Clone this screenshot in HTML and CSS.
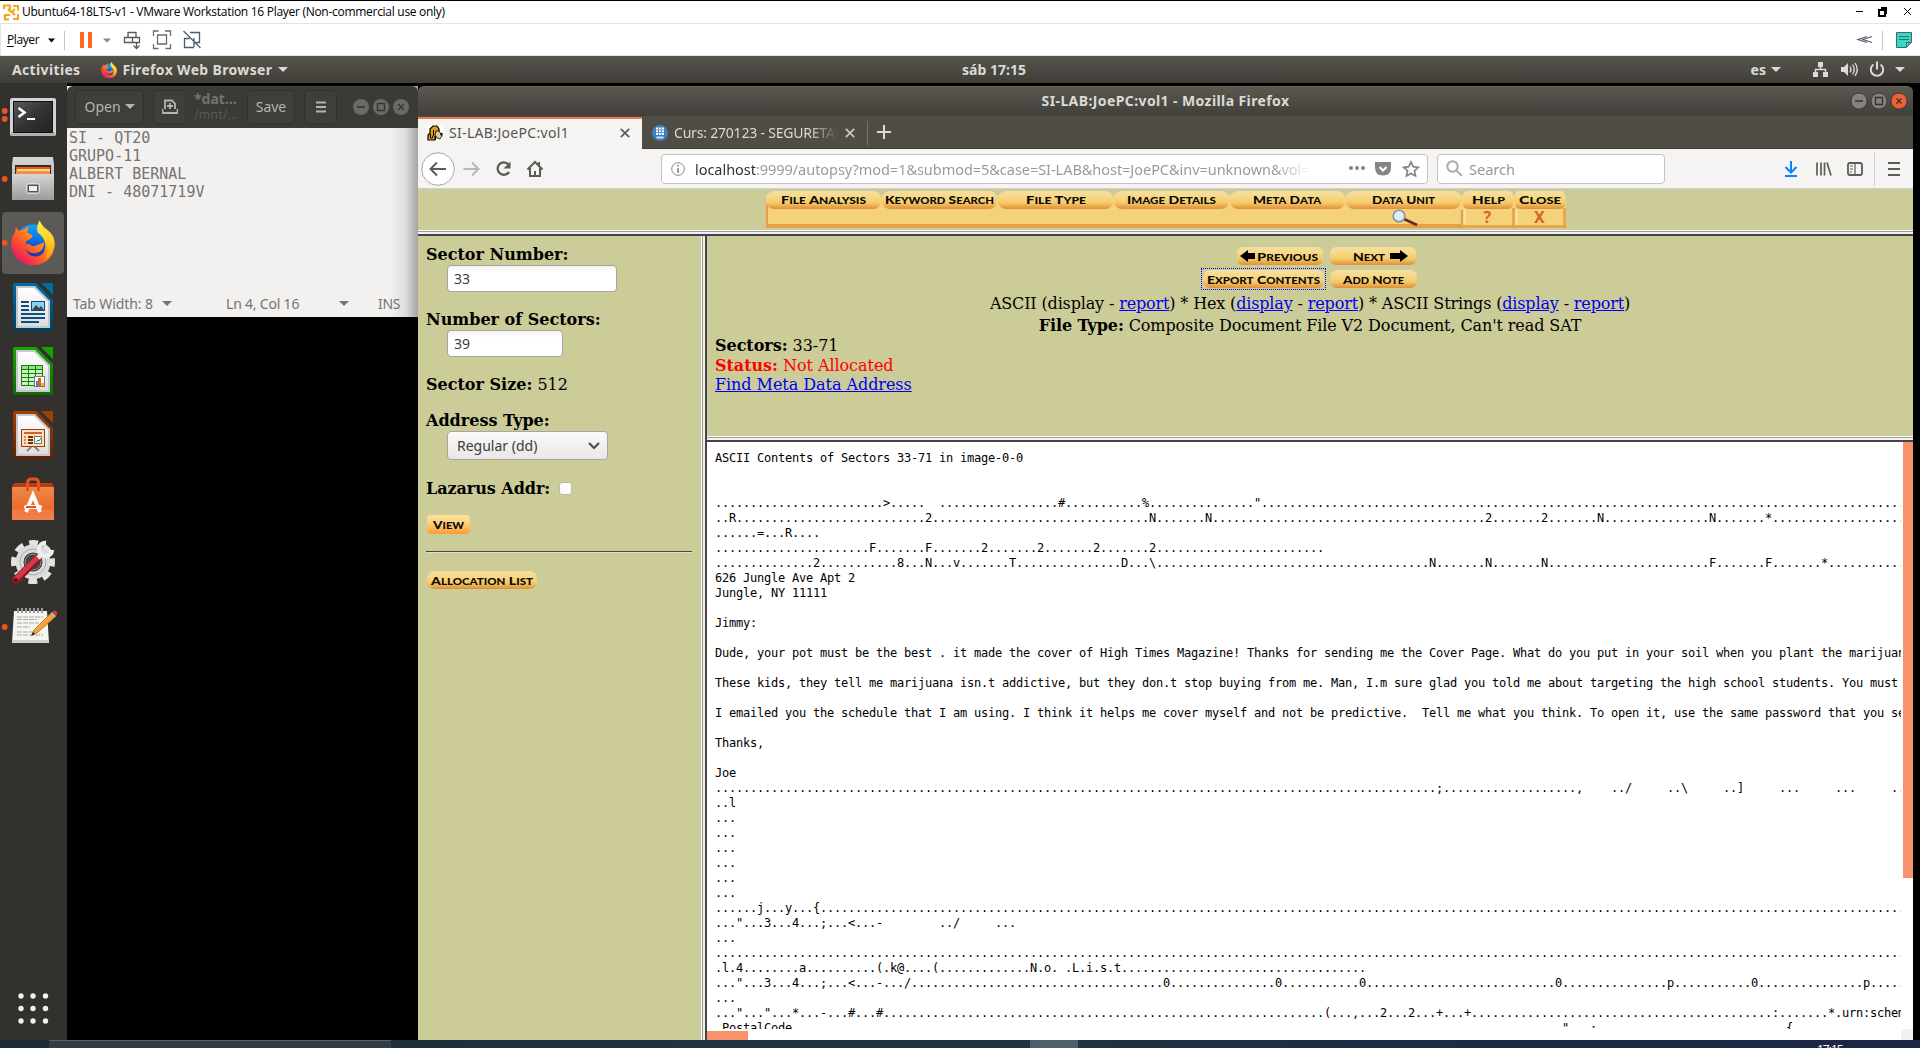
FILE: index.html
```html
<!DOCTYPE html>
<html lang="en">
<head>
<meta charset="utf-8">
<title>Ubuntu64-18LTS-v1 - VMware Workstation 16 Player</title>
<link rel="stylesheet" href="styles.css">
</head>
<body>
<svg width="0" height="0" class="defs">
  <defs>
    <linearGradient id="gold" x1="0" y1="0" x2="0" y2="1"><stop offset="0" stop-color="#f3dfa6"/><stop offset=".3" stop-color="#f8d988"/><stop offset=".65" stop-color="#f4cb6c"/><stop offset="1" stop-color="#e08f35"/></linearGradient>
    <linearGradient id="goldv" x1="0" y1="0" x2="0" y2="1"><stop offset="0" stop-color="#fbe2a0"/><stop offset=".45" stop-color="#ffd076"/><stop offset="1" stop-color="#fa9a38"/></linearGradient>
    <linearGradient id="silver" x1="0" y1="0" x2="0" y2="1"><stop offset="0" stop-color="#d6d6d6"/><stop offset="1" stop-color="#9c9c9c"/></linearGradient>
    <linearGradient id="paper" x1="0" y1="0" x2="0" y2="1"><stop offset="0" stop-color="#fff"/><stop offset="1" stop-color="#dedede"/></linearGradient>
    <linearGradient id="screen" x1="0" y1="0" x2="1" y2="1"><stop offset="0" stop-color="#5a5a5a"/><stop offset=".5" stop-color="#333"/><stop offset="1" stop-color="#222"/></linearGradient>
    <linearGradient id="fox" x1=".9" y1="0" x2=".1" y2=".9"><stop offset="0" stop-color="#ffe63c"/><stop offset=".35" stop-color="#ffa31a"/><stop offset=".65" stop-color="#ff5a28"/><stop offset="1" stop-color="#e3106c"/></linearGradient>
    <linearGradient id="globe" x1=".6" y1="0" x2=".4" y2="1"><stop offset="0" stop-color="#0fa8ff"/><stop offset=".5" stop-color="#0a5fe0"/><stop offset="1" stop-color="#33187d"/></linearGradient>
    <linearGradient id="flame" x1="0" y1="0" x2="0" y2="1"><stop offset="0" stop-color="#fff04a"/><stop offset=".5" stop-color="#ffcf26"/><stop offset="1" stop-color="#ff9012"/></linearGradient>
    <linearGradient id="bag" x1="0" y1="0" x2="0" y2="1"><stop offset="0" stop-color="#ea8a4c"/><stop offset=".65" stop-color="#ee6a2c"/><stop offset=".7" stop-color="#ef7a42"/><stop offset="1" stop-color="#f08050"/></linearGradient>
    <linearGradient id="wr" x1="0" y1="0" x2="0" y2="1"><stop offset="0" stop-color="#0369a3"/><stop offset="1" stop-color="#024064"/></linearGradient>
    <linearGradient id="ca" x1="0" y1="0" x2="0" y2="1"><stop offset="0" stop-color="#18a303"/><stop offset="1" stop-color="#106802"/></linearGradient>
    <linearGradient id="im" x1="0" y1="0" x2="0" y2="1"><stop offset="0" stop-color="#a33e03"/><stop offset="1" stop-color="#5e2302"/></linearGradient>
    <symbol id="firefox" viewBox="0 0 44 44">
      <circle cx="22" cy="23" r="19" fill="url(#globe)"/>
      <path d="M5 6 Q6 10 8.500 10.500 Q11 9 13.500 8.500 Q15 7 18 6 Q16.500 9 16.500 12 L21.500 15 Q21 18 17 19.500 Q14 21 14.500 24 Q16 22.500 19 24 Q22 27 25 25 L33 22 Q33 31 25 32.500 Q17 33.500 14 27 Q17 37 26 36 Q35 34 34 24 Q34 17 27 12 Q25 7 28.500 0 Q31 7 37 10 Q44 15 43.500 26 Q41 43 23 45 Q4 44 .5 27 Q-.5 17 4 12 Z" fill="url(#fox)"/>
      <path d="M28.500 0 Q31 6 37 10 Q44 16 43.500 24 Q42 35 34 39 Q38 30 35 23 Q33 17 27 12 Q25 7 28.500 0Z" fill="url(#flame)"/>
    </symbol>
  </defs>
</svg>

<header class="host-title">
  <svg class="vm-logo" width="17" height="17" viewBox="0 0 17 17" fill="none" stroke="#efa91b" stroke-width="2.200"><path d="M1 5V1.500h6V6M10 2h5v4.500M15 10v5h-5M6 15.500H2V11h5M5 5l3 3M12 5l-3 3 3 3" /></svg>
  <span class="host-caption">Ubuntu64-18LTS-v1 - VMware Workstation 16 Player (Non-commercial use only)</span>
  <svg class="host-controls" width="60" height="12" fill="none" stroke="#000" shape-rendering="crispEdges"><path d="M2 5.500h7"/><path d="M25 4h6v6h-6zM27 2h5v6" stroke-width="1.500"/><path d="M50 2l7 7M57 2l-7 7" shape-rendering="auto"/></svg>
</header>
<div class="host-tools">
  <span class="player"><u>P</u>layer</span>
  <svg width="200" height="30" viewBox="40 0 200 30" fill="none" stroke="#6a7076" stroke-width="1.300">
    <path d="M48 13.500h7l-3.500 4z" fill="#000" stroke="none"/><path d="M64.500 6v19" stroke="#c8c8c8" stroke-width="1"/>
    <path d="M80 7h4v16h-4zM88 7h4v16h-4z" fill="#ff6a1f" stroke="none"/><path d="M103 13.500h8l-4 4z" fill="#888" stroke="none"/>
    <path d="M128 7.500h8v5h-8zM124.500 12.500h8v5h-8zM132.500 12.500h7v5h-7zM136.500 17v6M133.500 20.500l3 3 3-3" stroke="#55595d"/>
    <path d="M153.500 11v-5h5M165 6h5.500v5M170.500 19v4.500h-5M158.500 23.500h-5V19M157.500 10h9v9h-9z" stroke="#6b6b6b"/>
    <path d="M190 7.500h9.500v10h-4M194 22.500h-9.500v-9h5M183.500 6l17 17M194 13v9" stroke="#4d5d69"/>
  </svg>
  <svg class="host-right" width="70" height="30" fill="none" stroke="#54606b"><path d="M18 11.500l-9 3 9 3M23 11.500l-9 3 9 3" stroke-width="1.200"/><path d="M33.500 6v19" stroke="#c8c8c8"/><path d="M47.500 7.500h15v10l-5 5h-10z" fill="#2fdcc3"/><path d="M62 17.500h-4.500V22M50 11.500h10M50 14.500h10"/></svg>
</div>

<div class="guest-bar">
  <div class="bar-left"><span class="act">Activities</span><svg width="16" height="16"><use href="#firefox"/></svg><span class="app-name">Firefox Web Browser</span><i class="tri"></i></div>
  <span class="clock">sáb 17:15</span>
  <div class="bar-right"><span>es</span><i class="tri"></i>
    <svg width="77" height="18" fill="none" stroke="#dcdad5" stroke-width="1.500"><path d="M5 1h5v5H5zM0 11h5v5H0zM10 11h5v5h-5z" fill="#dcdad5" stroke="none"/><path d="M7.500 6v3M2.500 11V8.500h10V11"/><path d="M28 6h3l4-4v13l-4-4h-3z" fill="#dcdad5" stroke="none"/><path d="M37 5.500q2 3 0 6M39.500 3.500q3.500 5 0 10M42 2q4.500 6.500 0 13" stroke-width="1.300"/><path d="M60.500 3.500a6.200 6.200 0 1 0 7 0M64 .500v8" stroke-width="2"/></svg>
    <i class="tri"></i></div>
</div>

<main class="desktop">
  <nav class="dock">
    <svg viewBox="0 0 67 64"><circle cx="4.700" cy="28" r="2.900" class="run"/><circle cx="4.700" cy="36" r="2.900" class="run"/><rect x="10" y="15" width="46" height="38" rx="2" fill="#d3d3d3"/><path d="M11 49h44v4H11z" fill="#b0b0b0"/><rect x="13.500" y="18.500" width="39" height="31" fill="url(#screen)" stroke="#111"/><path d="M18.500 25l6 4.500-6 4.500" fill="none" stroke="#fff" stroke-width="2.600"/><path d="M27 36h8" stroke="#fff" stroke-width="2"/></svg>
    <svg viewBox="0 0 67 64"><circle cx="4.700" cy="32" r="2.900" class="run"/><path d="M13 10h40l1 8v35H12V18z" fill="url(#silver)"/><path d="M15 18h36v10H15z" fill="#3b2a1c"/><path d="M16 20h34v8H16z" fill="#d8641c"/><path d="M17 22h33v2H17z" fill="#ffd39b"/><path d="M16 24h34v4H16z" fill="#f2923e"/><path d="M12 27h42v26H12z" fill="url(#silver)"/><rect x="26.500" y="36.500" width="13" height="10" rx="2" fill="#999" stroke="#ddd"/><rect x="28.500" y="38.500" width="9" height="6" fill="#eee" stroke="#555"/></svg>
    <svg viewBox="0 0 67 64"><rect x="2" y="1" width="62" height="62" rx="4" fill="#5b5a56"/><circle cx="4.700" cy="32" r="2.900" class="run"/><use href="#firefox" x="11" y="9" width="44" height="45"/></svg>
    <svg viewBox="0 0 67 64"><path d="M15 8h21l17 17v29q0 2-2 2H15q-2 0-2-2V10q0-2 2-2z" fill="url(#wr)"/><path d="M41 8h12v12z" fill="#0369a3"/><path d="M16 11h19l15 15v27H16z" fill="#c5c9cc"/><path d="M18 13h16l14 14v24H18z" fill="url(#paper)"/><path d="M21 27h8M21 31h8M21 35h8M21 39h24M21 43h24M21 47h18" stroke="#0b4f7a" stroke-width="1.800"/><rect x="31.500" y="26.500" width="13" height="9" fill="#8fd0f5" stroke="#0b4f7a"/><path d="M32 35l4-5 3 3 2-2 3 4z" fill="#444"/></svg>
    <svg viewBox="0 0 67 64"><path d="M15 8h21l17 17v29q0 2-2 2H15q-2 0-2-2V10q0-2 2-2z" fill="url(#ca)"/><path d="M41 8h12v12z" fill="#18a303"/><path d="M16 11h19l15 15v27H16z" fill="#c5c9cc"/><path d="M18 13h16l14 14v24H18z" fill="url(#paper)"/><path d="M21.500 26.500h21v20h-21z" fill="#ccf4c6"/><path d="M22 27h20v3H22z" fill="#92e285"/><path d="M21.500 26.500h21v20h-21zM21 30.500h21M21 34.500h21M21 38.500h21M21 42.500h21M28.500 26v20M35.500 26v20" fill="none" stroke="#148003"/><rect x="34.500" y="37.500" width="10" height="10" fill="#fff" stroke="#777"/><path d="M36 42h2v5h-2z" fill="#1c99e0"/><path d="M38 39h3v8h-3z" fill="#e0601c"/><path d="M41 44h3v3h-3z" fill="#e8b920"/></svg>
    <svg viewBox="0 0 67 64"><path d="M15 8h21l17 17v29q0 2-2 2H15q-2 0-2-2V10q0-2 2-2z" fill="url(#im)"/><path d="M41 8h12v12z" fill="#a33e03"/><path d="M16 11h19l15 15v27H16z" fill="#c5c9cc"/><path d="M18 13h16l14 14v24H18z" fill="url(#paper)"/><path d="M32 43l-5 5M34 43l5 5" stroke="#888" stroke-width="2"/><rect x="21.500" y="26.500" width="23" height="17" fill="#fbe0cb" stroke="#a33e03"/><path d="M24 30h18" stroke="#d8641c" stroke-width="2"/><path d="M24 34h2M24 37h2M24 40h2" stroke="#e08a50" stroke-width="2"/><path d="M28 34h5M28 37h5M28 40h5" stroke="#7a2d02" stroke-width="2"/><rect x="34.500" y="33.500" width="7" height="7" fill="#fff" stroke="#777"/><path d="M36 39l2-2 1 1 2-3" stroke="#249a24" fill="none"/></svg>
    <svg viewBox="0 0 67 64"><path d="M14 16h38l2 4H12z" fill="#b83c10"/><path d="M12 20h42v33H12z" fill="url(#bag)"/><path d="M27.500 24v-8q0-4 4-4h3q4 0 4 4v8" fill="none" stroke="#e5521c" stroke-width="3"/><path d="M26 45l7-17 7 17" fill="none" stroke="#fff" stroke-width="3.800"/><rect x="24" y="38" width="18" height="4" rx="2" fill="#fff"/><path d="M26 39h10v2H26z" fill="#e5521c"/></svg>
    <svg viewBox="0 0 67 64"><circle cx="33" cy="31" r="13.500" fill="none" stroke="#dcdcdc" stroke-width="8"/><circle cx="33" cy="31" r="19.500" fill="none" stroke="#e3e3e3" stroke-width="5" stroke-dasharray="9 6.315" stroke-dashoffset="4.500"/><circle cx="33" cy="31" r="13" fill="none" stroke="#aaa"/><circle cx="33" cy="31" r="8" fill="#444" stroke="#999"/><path d="M16 49L38 27" stroke="#8e1623" stroke-width="8" stroke-linecap="round"/><path d="M16 48L37 27" stroke="#d03a42" stroke-width="5" stroke-linecap="round"/><circle cx="16" cy="49" r="2" fill="#5a0c14"/><path d="M38 27l5-5" stroke="#e8e8e8" stroke-width="5"/><path d="M46 12a6.500 6.500 0 1 0 6 7" fill="none" stroke="#eee" stroke-width="4.500"/></svg>
    <svg viewBox="0 0 67 64"><circle cx="4.700" cy="32" r="2.900" class="run"/><path d="M14 16h33l2 32H12z" fill="#f4f4f0"/><path d="M12.500 45h36v3h-36z" fill="#cfcfc8"/><path d="M18 13v5M22 13v5M26 13v5M30 13v5M34 13v5M38 13v5M42 13v5" stroke="#999" stroke-width="2"/><path d="M17 22h26M17 24.500h20M17 28h22M17 32h13M17 37h16M17 40h26" stroke="#aaa" stroke-dasharray="5 1"/><path d="M32 40l2-5 16-16 4 4-17 15z" fill="#f3a33a" stroke="#b56a18" stroke-width=".8"/><path d="M50 19l2-2 4 4-2 2z" fill="#bbb"/><path d="M52 17q3-3 5 0 1 2-1 4z" fill="#e23a3a"/><path d="M31 41l2-4 2 2z" fill="#222"/></svg>
    <svg class="apps-grid" viewBox="0 0 67 64" fill="#f2f1f0"><circle cx="21" cy="20" r="2.700"/><circle cx="33" cy="20" r="2.700"/><circle cx="45.500" cy="20" r="2.700"/><circle cx="21" cy="32.500" r="2.700"/><circle cx="33" cy="32.500" r="2.700"/><circle cx="45.500" cy="32.500" r="2.700"/><circle cx="21" cy="45" r="2.700"/><circle cx="33" cy="45" r="2.700"/><circle cx="45.500" cy="45" r="2.700"/></svg>
  </nav>

  <section class="gedit">
    <div class="gedit-head">
      <span class="gbtn open">Open<i class="tri"></i></span>
      <span class="gbtn newdoc"><svg width="16" height="16" fill="none" stroke="#b5b4af" stroke-width="1.800"><path d="M3 10V1.500h7l3 3V10M8 4v6M5 7h6M.500 10v4h15v-4"/></svg></span>
      <div class="gtitle"><b>*dat…</b><span>/mnt/…</span></div>
      <span class="gbtn save">Save</span>
      <span class="gbtn burger"><svg width="10" height="12" stroke="#b5b4af" stroke-width="2"><path d="M0 1.500h10M0 6h10M0 10.500h10"/></svg></span>
      <svg class="gctl" width="60" height="20" fill="none" stroke="#363531" stroke-width="1.300"><g fill="#6b6a65" stroke="none"><circle cx="9" cy="10" r="8"/><circle cx="29" cy="10" r="8"/><circle cx="49" cy="10" r="8"/></g><path d="M5 10h8M25.500 6.500h7v7h-7zM46 7l6 6M52 7l-6 6"/></svg>
    </div>
    <pre class="gedit-text">SI - QT20
GRUPO-11
ALBERT BERNAL
DNI - 48071719V</pre>
    <div class="gedit-status"><span class="tabw">Tab Width: 8</span><i class="tri"></i><span class="pos">Ln 4, Col 16</span><i class="tri"></i><span class="ins">INS</span></div>
  </section>

  <section class="firefox">
    <div class="ff-title"><span>SI-LAB:JoePC:vol1 - Mozilla Firefox</span>
      <svg class="ffctl" width="60" height="18" fill="none" stroke="#33322e" stroke-width="1.300"><g stroke="#33322e" stroke-width=".8"><circle cx="9" cy="9" r="8" fill="#85837c"/><circle cx="29" cy="9" r="8" fill="#85837c"/><circle cx="49" cy="9" r="8" fill="#ee6035"/></g><path d="M5 9h8M25.500 5.500h7v7h-7zM46.500 6.500l5 5M51.500 6.500l-5 5"/></svg>
    </div>
    <div class="ff-tabs">
      <div class="tab active">
        <svg width="16" height="16"><path fill="#fff" d="M0 0h16v16H0z"/><path d="M1 10l2-2V4l3-3h4l2 3v4l-3 3-1 4H1z" fill="#d9a115" stroke="#000" stroke-width="1.200"/><path d="M9 6h3l2 3 1 2-2 3-3-1-2-3z" fill="#e5cda0" stroke="#000" stroke-width=".8"/><path d="M6.500 5v5l-2 4M3.500 9v4M8 11v4" fill="none" stroke="#000"/><path d="M13.500 8h2v2.500h-2z"/></svg>
        <span>SI-LAB:JoePC:vol1</span><svg class="x" width="10" height="10" stroke="#5a5955" stroke-width="1.700"><path d="M.800.800l8.400 8.400M9.200.800L.800 9.200"/></svg>
      </div>
      <div class="tab idle">
        <svg width="16" height="16"><circle cx="8" cy="8" r="8" fill="#3c7fc0"/><path d="M4 2.500h8v7.500H4z" fill="#fff"/><path d="M6.500 2v8M9.300 2v8M4 5h8M4 7.500h8" stroke="#3c7fc0" stroke-width=".8"/><path d="M4.500 12.500h7" stroke="#cfe0f0" stroke-width="2"/></svg>
        <span>Curs: 270123 - SEGURETAT</span><svg class="x" width="10" height="10" stroke="#c9c7c1" stroke-width="1.700"><path d="M.800.800l8.400 8.400M9.200.800L.800 9.200"/></svg>
      </div>
      <svg class="plus" width="14" height="14" stroke="#dddbd5" stroke-width="2"><path d="M0 7h14M7 0v14"/></svg>
    </div>
    <div class="ff-nav">
      <svg width="135" height="40" fill="none" stroke="#5c5b58" stroke-width="2"><circle cx="20" cy="20" r="16.300" fill="#fff" stroke="#a9a7a4" stroke-width="1"/><path d="M28 20H13M19 13.500L12.500 20l6.500 6.500"/><path d="M45.500 20H60M54 13.500l6.500 6.500-6.500 6.500" stroke="#b9b8b6"/><path d="M90.500 15.500a6.200 6.200 0 1 0 .5 7.500" stroke-width="2.300"/><path d="M92.500 12.500v7h-7z" fill="#5c5b58" stroke="none"/><path d="M109.500 20.500L117 13l7.500 7.500M112 19v8h10v-8M117 22v5M121 13v4" /></svg>
      <div class="url">
        <svg width="14" height="14" fill="none" stroke="#888"><circle cx="7" cy="7" r="6.300"/><path d="M7 6v5M7 3v1.700" stroke-width="1.600"/></svg>
        <span class="addr"><b>localhost</b>:9999/autopsy?mod=1&amp;submod=5&amp;case=SI-LAB&amp;host=JoePC&amp;inv=unknown&amp;vol=vol1</span>
        <svg width="76" height="18" fill="#868584"><circle cx="4" cy="8" r="2"/><circle cx="10" cy="8" r="2"/><circle cx="16" cy="8" r="2"/><path d="M28 2h16v5.500q0 8-8 8t-8-8z"/><path d="M32.500 7l3.500 3.500L39.500 7" fill="none" stroke="#fff" stroke-width="2"/><path d="M64 2l2.200 4.700 5.100.6-3.800 3.500 1 5.100-4.500-2.500-4.500 2.500 1-5.100-3.800-3.500 5.100-.6z" fill="none" stroke="#868584" stroke-width="1.700"/></svg>
      </div>
      <div class="search"><svg width="17" height="17" fill="none" stroke="#aaa" stroke-width="2"><circle cx="6.500" cy="6.500" r="5.200"/><path d="M10.500 10.500l5.500 5.500"/></svg><span>Search</span></div>
      <svg class="nav-right" width="135" height="40" fill="none" stroke="#5c5b58" stroke-width="2"><path d="M13 12v11M7.500 18l5.500 5.500 5.500-5.500M7 27h12" stroke="#0a84ff"/><path d="M39 13.500v13M43 13.500v13M46.500 13.500v13M49 13.500l4 13" stroke-width="1.700"/><rect x="70" y="14" width="14" height="12" rx="2" stroke-width="1.800"/><path d="M77 14v12M72 17h3M72 20h3M72 23h2" stroke-width="1.200"/><path d="M96.500 3v34" stroke="#d4d2d0" stroke-width="1"/><path d="M110 14h12M110 20h12M110 26h12"/></svg>
    </div>

    <div class="frames">
      <div class="frame-menu">
        <svg width="800" height="38" class="cop">
          <rect width="800" height="38" fill="#f4d27c"/><path d="M0 34h696v4H0zM0 10h2v28H0z" fill="#e6a148"/>
          <path d="M0 0h800v5H0z" fill="#c9cb9c"/>
          <g fill="url(#gold)"><rect x="0" y="1" width="115" height="18" rx="8"/><rect x="116" y="1" width="115" height="18" rx="8"/><rect x="232" y="1" width="115" height="18" rx="8"/><rect x="348" y="1" width="115" height="18" rx="8"/><rect x="464" y="1" width="115" height="18" rx="8"/><rect x="580" y="1" width="115" height="18" rx="8"/><rect x="697" y="1" width="50" height="18" rx="5"/><rect x="749" y="1" width="50" height="18" rx="5"/></g>
          <path d="M696 20v18M747.500 18v20M798.500 18v20M696 36.500h104" stroke="#e6a148" stroke-width="2.500"/>
          <path d="M698.500 20v15M750.500 20v15" stroke="#fae3a5" stroke-width="2"/>
          <text x="15" y="14" textLength="85" lengthAdjust="spacingAndGlyphs">F<tspan>ILE</tspan> A<tspan>NALYSIS</tspan></text>
          <text x="119" y="14" textLength="109" lengthAdjust="spacingAndGlyphs">K<tspan>EYWORD</tspan> S<tspan>EARCH</tspan></text>
          <text x="260" y="14" textLength="60" lengthAdjust="spacingAndGlyphs">F<tspan>ILE</tspan> T<tspan>YPE</tspan></text>
          <text x="361" y="14" textLength="89" lengthAdjust="spacingAndGlyphs">I<tspan>MAGE</tspan> D<tspan>ETAILS</tspan></text>
          <text x="487" y="14" textLength="68" lengthAdjust="spacingAndGlyphs">M<tspan>ETA</tspan> D<tspan>ATA</tspan></text>
          <text x="606" y="14" textLength="63" lengthAdjust="spacingAndGlyphs">D<tspan>ATA</tspan> U<tspan>NIT</tspan></text>
          <text x="706" y="14" textLength="33" lengthAdjust="spacingAndGlyphs">H<tspan>ELP</tspan></text>
          <text x="753" y="14" textLength="42" lengthAdjust="spacingAndGlyphs">C<tspan>LOSE</tspan></text>
          <text x="717.500" y="33" class="red">?</text><text x="768" y="33" class="red">X</text>
          <path d="M638 29l13 6" stroke="#6b2d2a" stroke-width="3"/><circle cx="633" cy="26" r="5.800" fill="#d8f0f6" stroke="#8a8f96" stroke-width="1.500"/>
        </svg>
      </div>
      <div class="split-h"></div>
      <div class="frame-row">
        <div class="frame-form">
          <b class="lbl">Sector Number:</b>
          <div class="field wide">33</div>
          <b class="lbl">Number of Sectors:</b>
          <div class="field narrow">39</div>
          <div class="lbl"><b>Sector Size:</b> 512</div>
          <b class="lbl at">Address Type:</b>
          <div class="select">Regular (dd)<svg width="12" height="8" fill="none" stroke="#4a4a48" stroke-width="2"><path d="M1 1l5 5 5-5"/></svg></div>
          <div class="lbl laz"><b>Lazarus Addr:</b><i class="check"></i></div>
          <svg class="view cop" width="43" height="19"><rect width="43" height="19" rx="4" fill="url(#goldv)"/><text x="6" y="14" textLength="31" lengthAdjust="spacingAndGlyphs">V<tspan>IEW</tspan></text></svg>
          <div class="rule"></div>
          <svg class="cop" width="110" height="18"><rect width="110" height="18" rx="8" fill="url(#gold)"/><text x="4" y="13.500" textLength="102" lengthAdjust="spacingAndGlyphs">A<tspan>LLOCATION</tspan> L<tspan>IST</tspan></text></svg>
        </div>
        <div class="split-v"></div>
        <div class="frame-main">
          <div class="frame-info">
            <div class="btns b1">
              <svg class="cop" width="86" height="18"><rect width="86" height="18" rx="6" fill="url(#gold)"/><path d="M3 9l8-6v3h7v6H11v3z"/><text x="20" y="14" textLength="61" lengthAdjust="spacingAndGlyphs">P<tspan>REVIOUS</tspan></text></svg>
              <svg class="cop" width="86" height="18"><rect width="86" height="18" rx="6" fill="url(#gold)"/><path d="M78 9l-8-6v3H60v6h10v3z"/><text x="23" y="14" textLength="32" lengthAdjust="spacingAndGlyphs">N<tspan>EXT</tspan></text></svg>
            </div>
            <div class="btns b2">
              <span class="focus"><svg class="cop" width="121" height="18"><rect width="121" height="18" rx="7" fill="url(#gold)"/><text x="4" y="13.500" textLength="113" lengthAdjust="spacingAndGlyphs">E<tspan>XPORT</tspan> C<tspan>ONTENTS</tspan></text></svg></span>
              <svg class="cop" width="87" height="18"><rect width="87" height="18" rx="7" fill="url(#gold)"/><text x="13" y="13.500" textLength="61" lengthAdjust="spacingAndGlyphs">A<tspan>DD</tspan> N<tspan>OTE</tspan></text></svg>
            </div>
            <p class="modes">ASCII (display - <a href="#">report</a>) * Hex (<a href="#">display</a> - <a href="#">report</a>) * ASCII Strings (<a href="#">display</a> - <a href="#">report</a>)</p>
            <p class="ftype"><b>File Type:</b> Composite Document File V2 Document, Can't read SAT</p>
            <p class="l"><b>Sectors:</b> 33-71</p>
            <p class="l status"><b>Status:</b> Not Allocated</p>
            <p class="l find"><a href="#">Find Meta Data Address</a></p>
          </div>
          <div class="split-h"></div>
          <div class="frame-dump">
            <pre id="dump"></pre>
            <div class="vtrack"><i></i></div>
            <div class="htrack"><i></i></div>
            <div class="corner"></div>
          </div>
        </div>
      </div>
    </div>
  </section>
</main>
<footer class="taskbar"><i class="t1"></i><i class="t2"></i><span>17:15</span></footer>
<script src="dump.js"></script>
</body>
</html>
```

FILE: dump.js
```js
// Each dump row lists [column, text] pairs; unprintable bytes between them show as dots.
// A row may end with a number: the column at which the dots stop.
const END = 174;
function row(...parts) {
  let out = "";
  for (const p of parts) {
    if (typeof p === "number") { out = out.padEnd(p, "."); return out; }
    out = out.padEnd(p[0], ".") + p[1];
  }
  return out.padEnd(END, ".");
}
const gap = (n) => " ".repeat(n);
const dots = "...";
const lines = [
  "ASCII Contents of Sectors 33-71 in image-0-0",
  "", "",
  row([24, ">....." + gap(2)], [49, "#"], [61, "%"], [77, '"']),
  row([2, "R"], [30, "2"], [62, "N"], [70, "N"], [110, "2"], [118, "2"], [126, "N"], [142, "N"], [150, "*"]),
  "......=...R....",
  row([22, "F"], [30, "F"], [38, "2"], [46, "2"], [54, "2"], [62, "2"], 87),
  row([14, "2"], [26, "8"], [30, "N"], [34, "v"], [42, "T"], [58, "D"], [62, "\\"], [102, "N"], [110, "N"], [118, "N"], [142, "F"], [150, "F"], [158, "*"]),
  "626 Jungle Ave Apt 2",
  "Jungle, NY 11111",
  "",
  "Jimmy:",
  "",
  "Dude, your pot must be the best . it made the cover of High Times Magazine! Thanks for sending me the Cover Page. What do you put in your soil when you plant the marijuana",
  "",
  "These kids, they tell me marijuana isn.t addictive, but they don.t stop buying from me. Man, I.m sure glad you told me about targeting the high school students. You must",
  "",
  "I emailed you the schedule that I am using. I think it helps me cover myself and not be predictive.  Tell me what you think. To open it, use the same password that you sent",
  "",
  "Thanks,",
  "",
  "Joe",
  row([103, ";"], [123, "," + gap(4) + "../" + gap(5) + "..\\" + gap(5) + "..]" + gap(5) + dots + gap(5) + dots + gap(5) + dots], 171),
  "..l",
  dots, dots, dots, dots, dots, dots,
  row([6, "j"], [10, "y"], [14, "{"]),
  '..."...3...4...;...<...-' + gap(8) + "../" + gap(5) + dots,
  dots,
  row(),
  row([1, "l"], [3, "4"], [12, "a"], [23, "(.k@"], [31, "("], [45, "N.o. .L.i.s.t"], 93),
  row([3, '"'], [7, "3"], [11, "4"], [15, ";"], [19, "<"], [23, "-"], [27, "/"], [64, "0"], [80, "0"], [92, "0"], [120, "0"], [136, "p"], [148, "0"], [164, "p"]),
  dots,
  row([3, '"'], [7, '"'], [11, "*"], [15, "-"], [19, "#"], [23, "#"], [87, "("], [91, ","], [95, "2"], [99, "2"], [103, "+"], [107, "+"], [151, ":"], [159, "*.urn:schemas"]),
  " PostalCode" + gap(110) + '"' + gap(3) + ";" + gap(27) + "{",
];
document.getElementById("dump").textContent = lines.join("\n");
```

FILE: styles.css
```css
* { box-sizing: border-box; }
body { margin: 0; width: 1920px; height: 1048px; overflow: hidden; display: flex; flex-direction: column; background: #000; font-family: "Noto Sans", "Open Sans", sans-serif; color: #3c3c3c; }
svg { display: block; flex: none; }
i { font-style: normal; flex: none; }
p { margin: 0; }
.defs { position: absolute; }
.tri { width: 0; height: 0; border: 5px solid transparent; border-top-color: currentColor; border-bottom: 0; }

/* host window chrome */
.host-title { height: 24px; flex: none; background: #fff; border-top: 1px solid #000; border-bottom: 1px solid #e4e4e4; display: flex; align-items: center; padding: 0 6px 0 3px; font: 12px/20px "Open Sans", sans-serif; color: #000; }
.host-caption { margin-left: 2px; white-space: nowrap; letter-spacing: -.285px; }
.host-controls { margin-left: auto; }
.host-tools { height: 32px; flex: none; background: #fff; display: flex; align-items: center; border-left: 1px solid #e4e4e4; border-bottom: 1px solid #e4e4e4; padding-left: 6px; font: 12px/20px "Open Sans", sans-serif; color: #000; }
.player { width: 33px; letter-spacing: -.4px; }
.player u { text-underline-offset: 2px; }
.host-right { margin-left: auto; margin-right: 1px; }

/* guest top bar */
.guest-bar { height: 27px; flex: none; background: linear-gradient(#57544b, #3f3e39); display: grid; grid-template-columns: 1fr auto 1fr; align-items: center; font-size: 14px; font-weight: 700; color: #dcdad5; }
.bar-left { display: flex; align-items: center; padding-left: 12px; }
.bar-left svg { margin-left: 20px; margin-right: 6px; }
.bar-left .tri { margin-left: 6px; }
.act { letter-spacing: .35px; }
.app-name { letter-spacing: .34px; }
.clock { position: relative; left: 34px; }
.bar-right { display: flex; align-items: center; justify-content: flex-end; padding-right: 15px; }
.bar-right .tri { margin-left: 5px; }
.bar-right svg { margin-left: 32px; }

.desktop { flex: 1; min-height: 0; display: flex; }
.dock { width: 67px; background: #32312d; display: flex; flex-direction: column; }
.dock svg { width: 67px; height: 64px; }
.dock .run { fill: #e95420; }
.dock .apps-grid { margin-top: auto; margin-bottom: 0; }

/* text editor */
.gedit { width: 351px; height: 231px; margin-top: 3px; background: linear-gradient(90deg, #f2f1f0 calc(100% - 28px), #dddcdb calc(100% - 12px), #a5a4a3); display: flex; flex-direction: column; color: #77736f; }
.gedit-head { height: 42px; background: #3b3a36; border-radius: 6px 6px 0 0; display: flex; align-items: center; padding: 0 0 2px 8px; font-size: 14px; color: #b5b4af; border-top: 1px solid #464540; }
.gbtn { height: 34px; border: 1px solid #32312d; border-radius: 4px; display: flex; align-items: center; justify-content: center; background: #3f3e3a; }
.open { width: 69px; gap: 4px; }
.newdoc { width: 33px; margin-left: 9px; }
.gtitle { width: 46px; margin-left: 8px; font-size: 14px; line-height: 16px; color: #74736e; white-space: nowrap; display: flex; flex-direction: column; }
.gtitle span { font-size: 12px; letter-spacing: .4px; color: #5a5955; }
.save { width: 48px; margin-left: 7px; }
.burger { width: 33px; margin-left: 9px; }
.gctl { margin-left: 15px; }
.gedit-text { margin: 0; flex: 1; padding: 1px 2px 0; font: 15px/18px "DejaVu Sans Mono", monospace; }
.gedit-status { height: 27px; display: flex; align-items: center; padding-left: 6px; font-size: 14px; white-space: nowrap; }
.tabw { letter-spacing: -.1px; width: 84px; }
.gedit-status .tri { margin-left: 5px; }
.pos { margin-left: 54px; width: 76px; letter-spacing: -.2px; }
.pos + .tri { margin-left: 37px !important; }
.ins { margin-left: 29px; letter-spacing: -.3px; }

/* browser */
.firefox { width: 1495px; margin-top: 3px; display: flex; flex-direction: column; }
.ff-title { height: 30px; background: linear-gradient(#5b584f, #403f3a); border-top: 1px solid #6a675e; border-radius: 6px 6px 0 0; display: grid; grid-template-columns: 1fr auto 1fr; align-items: center; color: #dcdad5; font-size: 14px; font-weight: 700; letter-spacing: .4px; padding-bottom: 2px; }
.ff-title span { grid-column: 2; }
.ffctl { justify-self: end; margin-right: 3px; }
.ff-tabs { height: 33px; background: #504d46; display: flex; align-items: center; font-size: 14px; color: #dcdad5; white-space: nowrap; border-bottom: 1px solid #3a3934; }
.tab { height: 33px; display: flex; align-items: center; margin-bottom: -1px; }
.active { width: 224px; background: #f5f4f2; color: #55544f; border-top: 2px solid #f07746; margin-top: 1px; height: 32px; padding: 0 12px 3px 9px; }
.active span { margin-left: 6px; letter-spacing: .33px; }
.x { margin-left: auto; }
.idle { width: 226px; padding: 0 12px 0 10px; border-right: 1px solid #77746c; height: 24px; }
.idle span { margin-left: 6px; width: 164px; overflow: hidden; letter-spacing: -.2px; -webkit-mask-image: linear-gradient(90deg, #000 82%, transparent); mask-image: linear-gradient(90deg, #000 82%, transparent); }
.plus { margin-left: 9px; }
.ff-nav { height: 40px; background: #f5f4f2; border-bottom: 1px solid #d0cecb; display: flex; align-items: center; font-size: 14.500px; }
.url { margin-left: 108px; width: 767px; height: 30px; border: 1px solid #c4c2bf; border-radius: 4px; background: #fff; display: flex; align-items: center; padding-left: 9px; color: #9b9a98; }
.addr { margin-left: 10px; width: 616px; white-space: nowrap; overflow: hidden; letter-spacing: -.04px; -webkit-mask-image: linear-gradient(90deg, #000 94%, transparent); mask-image: linear-gradient(90deg, #000 94%, transparent); }
.addr b { font-weight: 400; color: #333; }
.addr + svg { margin-left: 36px; }
.search { margin-left: 9px; width: 228px; height: 30px; border: 1px solid #c4c2bf; border-radius: 4px; background: #fff; display: flex; align-items: center; padding-left: 8px; color: #999; }
.search span { margin-left: 6px; }
.nav-right { margin-left: auto; }

/* autopsy frames */
.frames { flex: 1; min-height: 0; display: flex; flex-direction: column; background: #cccc99; font: 16px/19px "DejaVu Serif", serif; color: #000; }
.frame-menu { height: 41px; padding: 1px 0 0 348px; flex: none; }
.split-h { height: 6px; flex: none; background: linear-gradient(#fff 1px, #9c9a98 1px 2px, #f2f1f0 2px 4px, #454443 4px); }
.split-v { width: 6px; flex: none; background: linear-gradient(90deg, #fff 1px, #9c9a98 1px 2px, #f2f1f0 2px 4px, #454443 4px); }
.frame-row { flex: 1; min-height: 0; display: flex; }
.frame-form { width: 283px; padding: 9px 0 0 8px; display: flex; flex-direction: column; align-items: flex-start; }
.lbl { height: 19px; white-space: nowrap; margin-bottom: 1px; }
.field, .select { margin-left: 21px; border: 1px solid #a8a5a0; border-radius: 4px; background: linear-gradient(#f3f3f2, #fff 25%); font: 14px/25px "Noto Sans", sans-serif; color: #3c3c3c; padding-left: 6px; height: 27px; margin-bottom: 18px; }
.wide { width: 170px; }
.narrow { width: 116px; }
.at { margin-top: 16px; }
.select { width: 161px; height: 29px; line-height: 27px; padding: 0 7px 0 9px; display: flex; align-items: center; justify-content: space-between; background: linear-gradient(#fbfafa, #e9e7e5); margin-bottom: 19px; }
.laz { display: flex; align-items: center; letter-spacing: -.05px; }
.check { width: 13px; height: 13px; margin-left: 9px; margin-top: -1px; background: #fdfdfd; border: 1px solid #bcb9b0; border-radius: 3px; }
.view { margin: 16px 0 17px 1px; }
.rule { width: 266px; height: 2px; background: #454455; border-bottom: 1px solid #dedec8; margin-bottom: 18px; }
.rule + svg { margin-left: 1px; }
.frame-main { flex: 1; min-width: 0; display: flex; flex-direction: column; }
.frame-info { height: 200px; padding: 11px 8px 0; text-align: center; white-space: nowrap; flex: none; }
.frame-info a { color: #0000ee; }
.btns { display: flex; justify-content: center; align-items: center; height: 18px; gap: 7px; position: relative; }
.b1 { padding-left: 33px; }
.b2 { margin-top: 5px; gap: 4px; padding-right: 2px; }
.focus { border: 1px dotted #0000ee; padding: 1px; height: 22px; }
.modes { margin-top: 6px; letter-spacing: -.15px; }
.ftype { margin-top: 3px; letter-spacing: -.1px; }
.l { text-align: left; line-height: 20px; letter-spacing: -.05px; }
.ftype + .l { margin-top: 1px; }
.find { margin-top: -1px; }
.status { color: #ff0000; }
.cop text { font: 900 12px "Lato", sans-serif; fill: #0c0a06; }
.cop tspan { font-size: 9.800px; }
.cop .red { font: 700 16px "Noto Sans", sans-serif; fill: #d9622b; }

.frame-dump { flex: 1; min-height: 0; background: #fff; display: grid; grid-template-columns: 1fr 12px; grid-template-rows: 1fr 11px; }
.frame-dump pre { margin: 0; padding: 9px 0 0 8px; font: 12px/15px "DejaVu Sans Mono", monospace; letter-spacing: -.224px; overflow: hidden; min-height: 0; min-width: 0; }
.vtrack { display: flex; justify-content: flex-end; }
.vtrack i { width: 10px; height: 436px; background: #f6936c; }
.htrack { display: flex; align-items: flex-end; }
.htrack i { width: 41px; height: 9px; background: #f6936c; }
.corner { background: #f2f1f0; }

.taskbar { height: 8px; flex: none; overflow: hidden; background: linear-gradient(90deg, #1d2b36, #203540 50%, #1b2a45 80%, #1c2745); display: flex; color: #fff; font: 12px/16px "Open Sans", sans-serif; }
.t1 { margin-left: 49px; width: 342px; background: #303c46; border-top: 1px solid #55606a; }
.t2 { margin-left: 639px; width: 48px; background: #4f5f6a; }
.taskbar span { margin-left: 739px; padding-top: 2px; letter-spacing: -1px; }
```
